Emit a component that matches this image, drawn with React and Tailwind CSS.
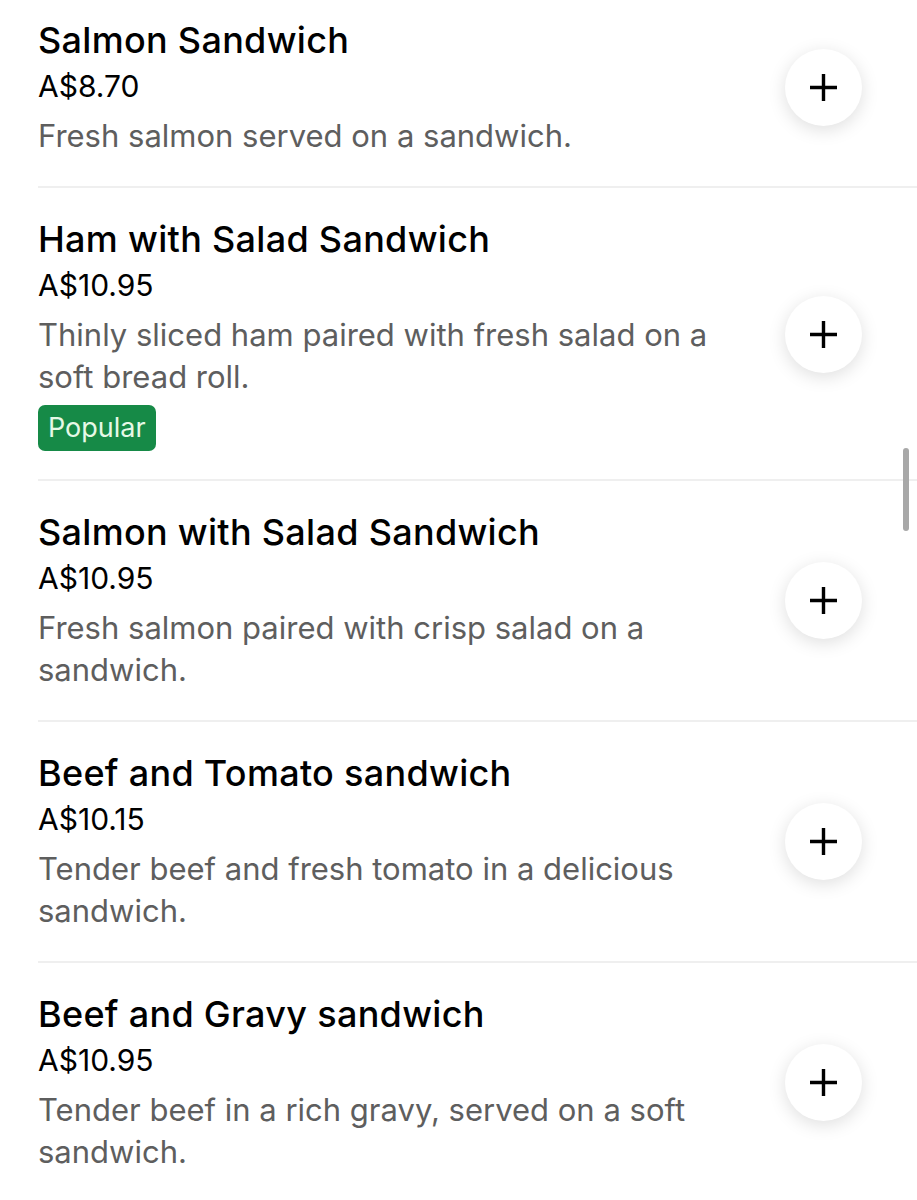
import React from "react";

const ITEMS = [
  {
    name: "Salmon Sandwich",
    price: "A$8.70",
    desc: "Fresh salmon served on a sandwich.",
  },
  {
    name: "Ham with Salad Sandwich",
    price: "A$10.95",
    desc: "Thinly sliced ham paired with fresh salad on a soft bread roll.",
    popular: true,
  },
  {
    name: "Salmon with Salad Sandwich",
    price: "A$10.95",
    desc: "Fresh salmon paired with crisp salad on a sandwich.",
  },
  {
    name: "Beef and Tomato sandwich",
    price: "A$10.15",
    desc: "Tender beef and fresh tomato in a delicious sandwich.",
  },
  {
    name: "Beef and Gravy sandwich",
    price: "A$10.95",
    desc: "Tender beef in a rich gravy, served on a soft sandwich.",
  },
];

function PlusIcon() {
  return (
    <svg width="29" height="29" viewBox="0 0 29 29" fill="none">
      <path d="M14.5 1v27M1 14.5h27" stroke="#000" strokeWidth="3.4" />
    </svg>
  );
}

function MenuItem({ item, first }) {
  return (
    <div
      className={`flex items-center ${item.popular ? "pb-[28px]" : "pb-[29px]"} ${
        first ? "pt-[18px]" : "pt-[29px] border-t-2 border-[#efefef]"
      }`}
    >
      <div className="w-[712px] pr-[20px]">
        <div className="text-[36px] leading-[44px] font-medium tracking-[0.3px] text-black">
          {item.name}
        </div>
        <div className="text-[30px] leading-[48px] text-black">{item.price}</div>
        <div className="mt-[5px] text-[31px] leading-[42px] text-[#5e5e5e]">
          {item.desc}
        </div>
        {item.popular && (
          <div className="mt-[7px] inline-flex items-center h-[46px] px-[10px] rounded-[7px] bg-[#168a47] text-[27px] text-[#e6f9e6]">
            Popular
          </div>
        )}
      </div>
      <button className="ml-[35px] w-[77px] h-[77px] rounded-full bg-white flex items-center justify-center shadow-[0_4px_18px_rgba(0,0,0,0.13)]">
        <PlusIcon />
      </button>
    </div>
  );
}

export default function App() {
  return (
    <div
      className="relative w-[917px] h-[1200px] bg-white overflow-hidden pl-[38px]"
      style={{ fontFamily: "Inter, 'Noto Sans', sans-serif" }}
    >
      {ITEMS.map((item, i) => (
        <MenuItem key={i} item={item} first={i === 0} />
      ))}
      {/* scrollbar */}
      <div className="absolute left-[903px] top-[448px] w-[6px] h-[83px] rounded-full bg-[#a8a8a8]" />
    </div>
  );
}
